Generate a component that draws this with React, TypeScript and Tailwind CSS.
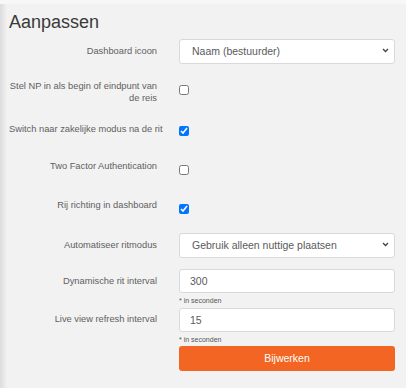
import React from "react";

function Label({ children, className = "" }: { children: React.ReactNode; className?: string }) {
    return (
        <div className={"w-[148px] shrink-0 text-right text-[9.3px] leading-[12px] text-[#606060] " + className}>
            {children}
        </div>
    );
}

function Select({ value }: { value: string }) {
    return (
        <div className="relative w-[216px] h-[25px]">
            <select
                defaultValue={value}
                className="appearance-none w-full h-full bg-white border border-[#d9d9d9] rounded-[3px] pl-[12px] text-[10.5px] text-[#5a5a5a] outline-none"
            >
                <option>{value}</option>
            </select>
            <svg className="absolute right-[6px] top-[10px] pointer-events-none" width="7" height="5" viewBox="0 0 7 5">
                <path d="M1 1 L3.5 3.5 L6 1" fill="none" stroke="#444" strokeWidth="1.3" />
            </svg>
        </div>
    );
}

function Input({ value }: { value: string }) {
    return (
        <input
            type="text"
            defaultValue={value}
            className="w-[216px] h-[24px] bg-white border border-[#d9d9d9] rounded-[3px] pl-[10px] text-[10.5px] text-[#5a5a5a] outline-none"
        />
    );
}

function Check({ checked }: { checked?: boolean }) {
    return (
        <input
            type="checkbox"
            defaultChecked={checked}
            className="w-[10px] h-[10px] m-0 accent-[#0075ff]"
        />
    );
}

export default function App() {
    return (
        <div className="w-[406px] h-[388px] bg-[#f2f2f2] font-['Liberation_Sans',Arial,sans-serif] overflow-hidden">
            <div className="h-[4px] bg-[#f7f7f7]" />
            <div className="flex h-[384px]">
                <div className="w-[7px] shrink-0 bg-gradient-to-r from-[#dcdcdc] to-[#f2f2f2]" />
                <div className="pl-[2px]">
                    <h1 className="mt-[7px] text-[18px] leading-[22px] text-[#3a3a3a]">Aanpassen</h1>

                    <div className="flex items-center mt-[5px]">
                        <Label>Dashboard icoon</Label>
                        <div className="ml-[22px]"><Select value="Naam (bestuurder)" /></div>
                    </div>

                    <div className="flex items-start mt-[17px]">
                        <Label>Stel NP in als begin of eindpunt van<br />de reis</Label>
                        <div className="ml-[22px] mt-[5px] flex"><Check /></div>
                    </div>

                    <div className="flex items-start mt-[19px]">
                        <Label className="whitespace-nowrap">Switch naar zakelijke modus na de rit</Label>
                        <div className="ml-[22px] mt-[3px] flex"><Check checked /></div>
                    </div>

                    <div className="flex items-start mt-[24px]">
                        <Label>Two Factor Authentication</Label>
                        <div className="ml-[22px] mt-[5px] flex"><Check /></div>
                    </div>

                    <div className="flex items-start mt-[24px]">
                        <Label>Rij richting in dashboard</Label>
                        <div className="ml-[22px] mt-[5px] flex"><Check checked /></div>
                    </div>

                    <div className="flex items-center mt-[18px]">
                        <Label>Automatiseer ritmodus</Label>
                        <div className="ml-[22px]"><Select value="Gebruik alleen nuttige plaatsen" /></div>
                    </div>

                    <div className="flex items-center mt-[11px]">
                        <Label>Dynamische rit interval</Label>
                        <div className="ml-[22px]"><Input value="300" /></div>
                    </div>
                    <div className="ml-[170px] mt-[4px] text-[7px] leading-[8px] text-[#555]">* in seconden</div>

                    <div className="flex items-start mt-[2px]">
                        <Label className="mt-[6px]">Live view refresh interval</Label>
                        <div className="ml-[22px]"><Input value="15" /></div>
                    </div>
                    <div className="ml-[170px] mt-[4px] text-[7px] leading-[8px] text-[#555]">* in seconden</div>

                    <div className="ml-[170px] mt-[1px]">
                        <button className="w-[216px] h-[25px] rounded-[3px] bg-[#f26522] text-white text-[10.5px]">
                            Bijwerken
                        </button>
                    </div>
                </div>
            </div>
        </div>
    );
}
